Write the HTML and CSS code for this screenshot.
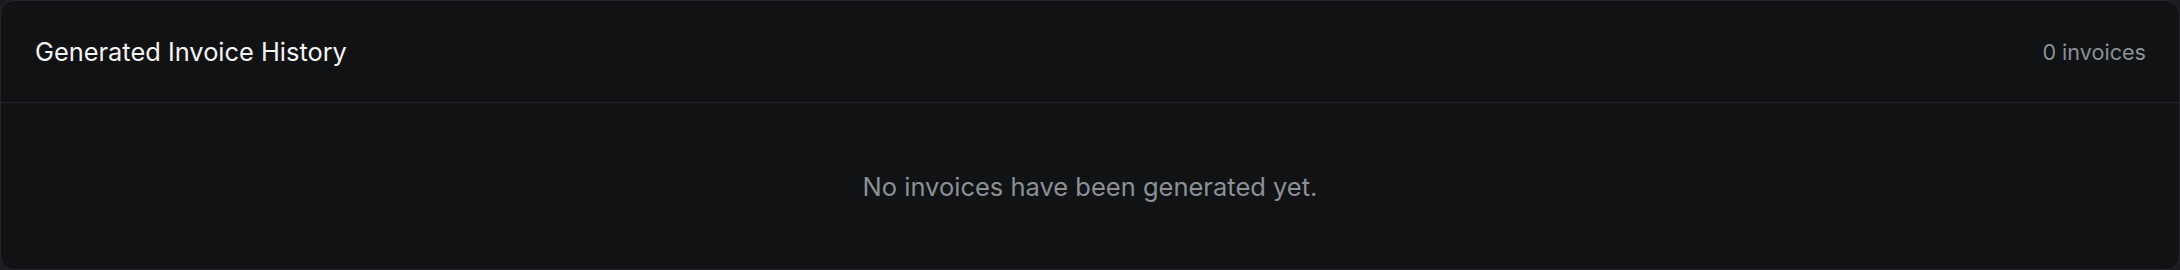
FILE: index.html
```html
<!DOCTYPE html>
<html lang="en">
<head>
  <meta charset="UTF-8" />
  <title>Invoice History</title>
  <link rel="stylesheet" href="styles.css">
</head>
<body>
  <div class="card">
    <div class="card-header">
      <h2 class="card-title">Generated Invoice History</h2>
      <span class="card-count">0 invoices</span>
    </div>
    <div class="card-body">
      <p class="empty">No invoices have been generated yet.</p>
    </div>
  </div>
</body>
</html>
```

FILE: styles.css
```css
body {
  background-color: #1b1c1f;
  margin: 0;
  font-family: Inter, "Noto Sans", sans-serif;
}
.card {
  height: 270px;
  box-sizing: border-box;
  background: #111214;
  border: 1px solid #25272b;
  border-radius: 14px;
  display: flex;
  flex-direction: column;
}
.card-header {
  display: flex;
  justify-content: space-between;
  align-items: center;
  height: 101px;
  padding: 0 33px 0 34px;
  border-bottom: 1px solid #222428;
}
.card-title {
  margin: 0;
  color: #f4f4f5;
  font-size: 25.4px;
  font-weight: 400;
}
.card-count {
  color: #8b8f96;
  font-size: 21.6px;
}
.card-body {
  flex: 1;
  display: flex;
  align-items: center;
  justify-content: center;
}
.empty {
  margin: 0;
  color: #8b8f96;
  font-size: 25.5px;
}
```
